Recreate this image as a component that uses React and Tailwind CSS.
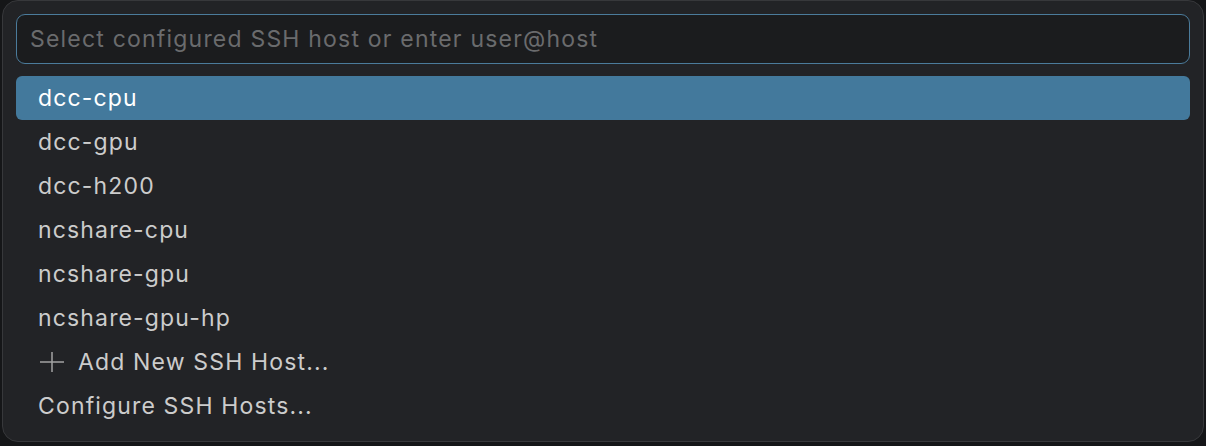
import { useState } from "react";

const hosts = ["dcc-cpu", "dcc-gpu", "dcc-h200", "ncshare-cpu", "ncshare-gpu", "ncshare-gpu-hp"];

const PlusIcon = () => (
  <svg width="26" height="22" viewBox="0 0 26 22" fill="none" stroke="currentColor" strokeWidth="1.5">
    <path d="M13 1v20M1 11h24" />
  </svg>
);

const App = () => {
  const [query, setQuery] = useState("");
  const [active, setActive] = useState(0);

  return (
    <div className="h-[446px] w-[1206px] overflow-hidden bg-[#151618] px-[2px] font-['Inter',sans-serif] tracking-[1.15px]">
      <div className="rounded-[16px] border border-[#37383b] bg-[#222326] px-[13px] pt-[13px] pb-[13px]">
        <div className="flex h-[50px] items-center rounded-[9px] border-[1.5px] border-[#4b7b9b] bg-[#1b1c1e] pl-[13px] pr-[13px]">
          <input
            type="text"
            autoFocus
            value={query}
            onChange={(e) => setQuery(e.target.value)}
            placeholder="Select configured SSH host or enter user@host"
            className="w-full bg-transparent text-[23px] tracking-[1.2px] text-[#d0d0d0] placeholder-[#6a6b6d] outline-none caret-[#c8c8c8]"
          />
        </div>

        <div className="mt-[12px] flex flex-col">
          {hosts.map((host, i) => (
            <div
              key={host}
              onMouseEnter={() => setActive(i)}
              className={
                i === active
                  ? "flex h-[44px] items-center rounded-[6px] bg-[#43799c] px-[22px] text-[23px] text-white"
                  : "flex h-[44px] items-center rounded-[6px] px-[22px] text-[23px] text-[#cccccc]"
              }
            >
              {host}
            </div>
          ))}
          <div className="flex h-[44px] items-center gap-[13px] pl-[23px] text-[23px] text-[#cccccc]">
            <span className="text-[#a2a2a2]">
              <PlusIcon />
            </span>
            Add New SSH Host...
          </div>
          <div className="flex h-[44px] items-center px-[22px] text-[23px] text-[#cccccc]">
            Configure SSH Hosts...
          </div>
        </div>
      </div>
    </div>
  );
};

export default App;
